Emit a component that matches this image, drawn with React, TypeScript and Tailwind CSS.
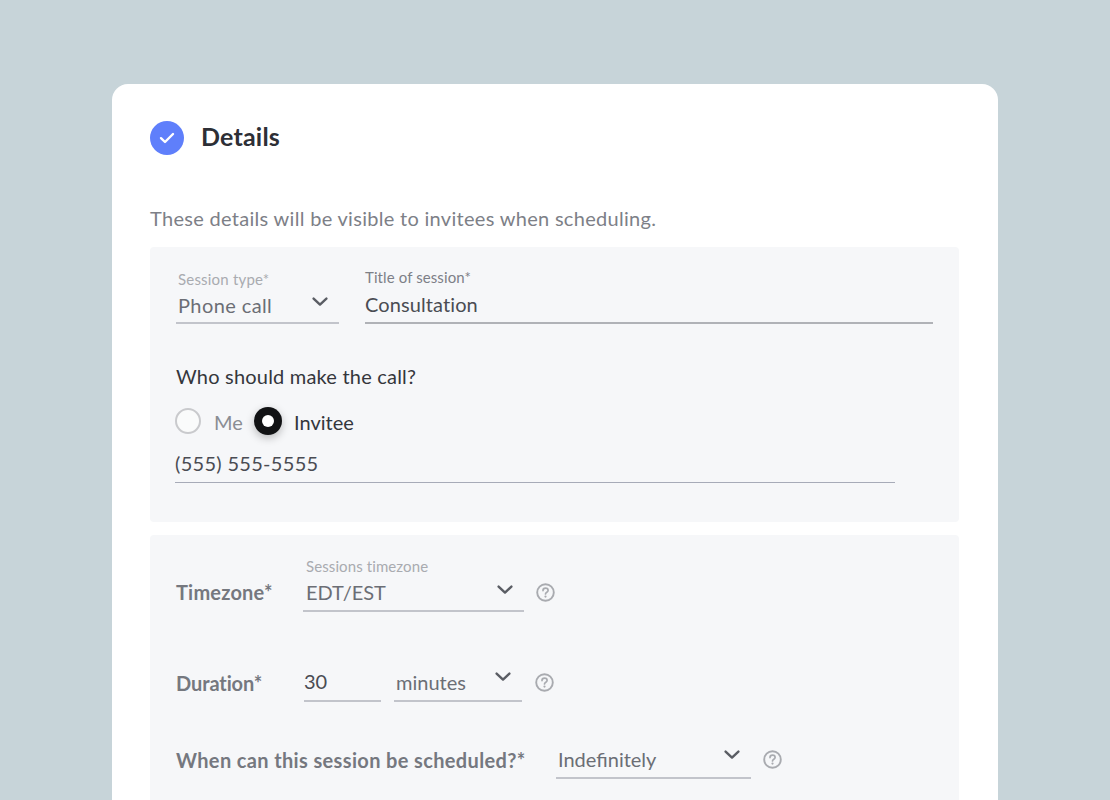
import React from "react";

function Chevron({ className }: { className?: string }) {
  return (
    <svg className={className} width="16" height="10" viewBox="0 0 16 10" fill="none">
      <path d="M1.6 1.6 L8 7.6 L14.4 1.6" stroke="#5a5d64" strokeWidth="2.4" strokeLinecap="round" strokeLinejoin="round" />
    </svg>
  );
}

function Help() {
  return (
    <svg width="19" height="19" viewBox="0 0 19 19" fill="none">
      <circle cx="9.5" cy="9.5" r="8.3" stroke="#a9abb0" strokeWidth="1.9" />
      <path d="M7 7.6 C7 6 8.2 5.2 9.5 5.2 C11 5.2 12.1 6.1 12.1 7.4 C12.1 9.2 9.5 9.2 9.5 11" stroke="#a9abb0" strokeWidth="1.7" strokeLinecap="round" fill="none" />
      <circle cx="9.5" cy="13.6" r="1.1" fill="#a9abb0" />
    </svg>
  );
}

export default function App() {
  return (
    <div className="h-[800px] overflow-hidden bg-[#c7d4d9] pt-[84px] font-['Lato',sans-serif]">
      <div className="ml-[112px] h-[716px] w-[886px] rounded-t-[16px] bg-white px-[38px] pt-[37px]">
        <div className="flex h-[34px] items-center gap-[17px]">
          <div className="flex h-[34px] w-[34px] items-center justify-center rounded-full bg-[#5f7ffb]">
            <svg width="16" height="12" viewBox="0 0 16 12" fill="none">
              <path d="M2 6.2 L6 10 L14 2" stroke="white" strokeWidth="2.4" strokeLinecap="round" strokeLinejoin="round" />
            </svg>
          </div>
          <h1 className="-mt-[4px] text-[25px] leading-[34px] font-bold tracking-[0.2px] text-[#2d2f36]">Details</h1>
        </div>
        <p className="mt-[51px] h-[41px] text-[20px] leading-[24px] tracking-[0.3px] text-[#7d8087]">These details will be visible to invitees when scheduling.</p>

        <section className="h-[275px] w-[809px] rounded-[4px] bg-[#f6f7f9] pl-[26px] pt-[23px]">
          <div className="flex gap-[26px]">
            <div className="h-[54px] w-[163px] border-b-2 border-[#c2c4cb] pl-[2px]">
              <div className="text-[15px] leading-[18px] tracking-[0.2px] text-[#a9abb0]">Session type*</div>
              <div className="mt-[5px] flex items-center justify-between pr-[11px]">
                <span className="text-[20px] leading-[24px] tracking-[0.4px] text-[#6b6e75]">Phone call</span>
                <Chevron className="-mt-[6px]" />
              </div>
            </div>
            <div className="-mt-[2px] h-[56px] w-[568px] border-b-2 border-[#b0b2b7]">
              <div className="text-[15px] leading-[18px] tracking-[0.1px] text-[#7d8087]">Title of session*</div>
              <div className="mt-[6px] text-[20px] leading-[24px] tracking-[0.1px] text-[#4a4c53]">Consultation</div>
            </div>
          </div>
          <div className="mt-[40px] text-[20px] leading-[24px] tracking-[0.2px] text-[#34363c]">Who should make the call?</div>
          <div className="mt-[19px] -ml-[1px] flex h-[28px] items-center">
            <span className="h-[26px] w-[26px] rounded-full border-2 border-[#c9cacd] bg-[#fafbfb]" />
            <span className="ml-[13px] mt-[2px] w-[40px] text-[20px] leading-[24px] text-[#8a8d93]">Me</span>
            <span className="flex h-[28px] w-[28px] items-center justify-center rounded-full bg-[#111214] shadow-[0_3px_8px_rgba(0,0,0,0.25)]">
              <span className="h-[12px] w-[12px] rounded-full bg-white" />
            </span>
            <span className="ml-[12px] mt-[2px] text-[20px] leading-[24px] text-[#34363c]">Invitee</span>
          </div>
          <div className="mt-[16px] -ml-[1px] h-[32px] w-[720px] border-b border-[#a7abb8] text-[20px] leading-[24px] tracking-[0.3px] text-[#4a4c53]">(555) 555-5555</div>
        </section>

        <section className="mt-[13px] h-[300px] w-[809px] rounded-[4px] bg-[#f6f7f9] pl-[26px] pt-[23px]">
          <div className="flex h-[54px] items-end">
            <div className="mb-[8px] w-[127px] text-[20px] leading-[24px] font-bold tracking-[0.2px] text-[#75787f]">Timezone*</div>
            <div className="h-[54px] w-[221px] border-b-2 border-[#c2c4cb] pl-[3px]">
              <div className="-mt-[1px] text-[15px] leading-[18px] tracking-[0.1px] text-[#a9abb0]">Sessions timezone</div>
              <div className="mt-[5px] flex items-center justify-between pr-[11px]">
                <span className="text-[20px] leading-[24px] text-[#6b6e75]">EDT/EST</span>
                <Chevron className="-mt-[5px]" />
              </div>
            </div>
            <div className="mb-[10px] ml-[12px]"><Help /></div>
          </div>
          <div className="mt-[54px] flex h-[36px] items-end">
            <div className="mb-[7px] w-[128px] text-[20px] leading-[24px] font-bold tracking-[-0.1px] text-[#75787f]">Duration*</div>
            <div className="h-[36px] w-[77px] border-b-2 border-[#c2c4cb] text-[20px] leading-[30px] text-[#4a4c53]">30</div>
            <div className="ml-[13px] flex h-[36px] w-[128px] items-start justify-between border-b-2 border-[#c2c4cb] pl-[2px] pr-[11px] pt-[4px]">
              <span className="text-[20px] leading-[24px] text-[#6b6e75]">minutes</span>
              <Chevron className="mt-[2px]" />
            </div>
            <div className="mb-[10px] ml-[13px]"><Help /></div>
          </div>
          <div className="mt-[41px] flex h-[36px] items-end">
            <div className="mb-[7px] w-[380px] text-[20px] leading-[24px] font-bold tracking-[0.36px] text-[#75787f]">When can this session be scheduled?*</div>
            <div className="flex h-[36px] w-[195px] items-start justify-between border-b-2 border-[#c2c4cb] pl-[2px] pr-[11px] pt-[4px]">
              <span className="text-[20px] leading-[24px] text-[#6b6e75]">Indefinitely</span>
              <Chevron className="mt-[3px]" />
            </div>
            <div className="mb-[10px] ml-[12px]"><Help /></div>
          </div>
        </section>
      </div>
    </div>
  );
}
